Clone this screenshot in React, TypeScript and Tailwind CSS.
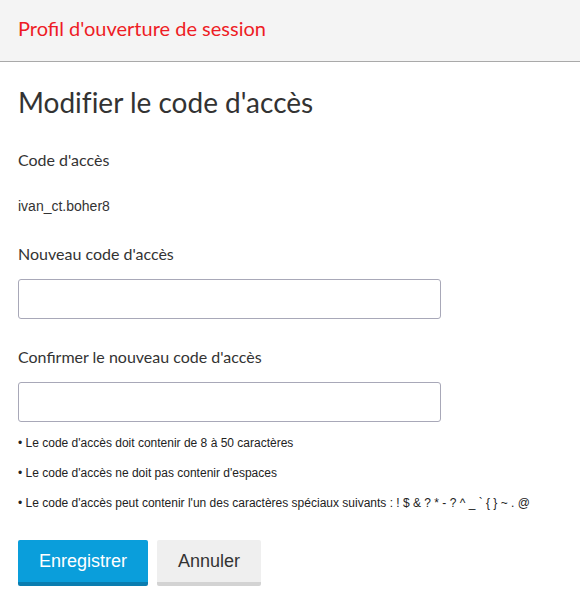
import React from 'react'

const RULES = [
  "Le code d'accès doit contenir de 8 à 50 caractères",
  "Le code d'accès ne doit pas contenir d'espaces",
  "Le code d'accès peut contenir l'un des caractères spéciaux suivants : ! $ & ? * - ? ^ _ ` { } ~ . @",
]

export default function App() {
  return (
    <div className="min-h-[611px] w-[580px] bg-white text-[#333]">
      {/* top bar */}
      <header className="h-[62px] border-b border-[#a9a9a9] bg-[#f4f4f4] px-[18px] pt-[18px]">
        <h1 className="font-['Lato',sans-serif] text-[20px] leading-none text-[#ee1c25]">
          Profil d'ouverture de session
        </h1>
      </header>

      <main className="px-[18px]">
        <h2 className="mt-[23px] font-['Lato',sans-serif] text-[28px] leading-[34px] text-[#333] [font-variant-ligatures:none]">
          Modifier le code d'accès
        </h2>

        <p className="mt-[31px] font-['Lato',sans-serif] text-[16px] leading-[19px]">Code d'accès</p>
        <p className="mt-[29px] font-['Liberation_Sans',Arial,sans-serif] text-[14px] leading-[16px]">ivan_ct.boher8</p>

        <label className="mt-[30px] block font-['Lato',sans-serif] text-[16px] leading-[19px]">
          Nouveau code d'accès
        </label>
        <input
          type="password"
          className="mt-[16px] block h-[40px] w-[423px] rounded-[3px] border border-[#a8a8b8] bg-white px-2 outline-none"
        />

        <label className="mt-[28px] block font-['Lato',sans-serif] text-[16px] leading-[19px]">
          Confirmer le nouveau code d'accès
        </label>
        <input
          type="password"
          className="mt-[16px] block h-[40px] w-[423px] rounded-[3px] border border-[#a8a8b8] bg-white px-2 outline-none"
        />

        <ul className="mt-[14px] font-['Liberation_Sans',Arial,sans-serif] text-[12px] leading-[14px] text-[#222]">
          {RULES.map((rule, i) => (
            <li key={i} className={i > 0 ? 'mt-[16px]' : ''}>
              • {rule}
            </li>
          ))}
        </ul>

        <div className="mt-[30px] flex gap-[9px]">
          <button
            type="submit"
            className="h-[46px] rounded-[2px] border-b-4 border-[#0a7db0] bg-[#0a9edb] px-[21px] font-['Liberation_Sans',Arial,sans-serif] text-[18px] text-white"
          >
            Enregistrer
          </button>
          <button
            type="button"
            className="h-[46px] rounded-[2px] border-b-4 border-[#d3d3d3] bg-[#efefef] px-[21px] font-['Liberation_Sans',Arial,sans-serif] text-[18px] text-[#333]"
          >
            Annuler
          </button>
        </div>
      </main>
    </div>
  )
}
